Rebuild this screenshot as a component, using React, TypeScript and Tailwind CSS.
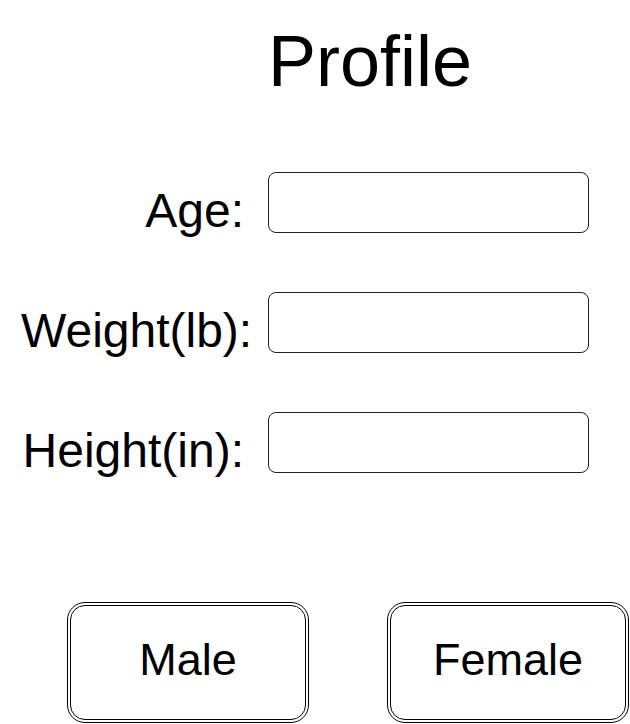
import React from "react";

const fields = ["Age:", "Weight(lb):", "Height(in):"];

const App = () => {
  return (
    <div className="w-[630px] h-[724px] bg-white text-black font-['Liberation_Sans',Arial,sans-serif] overflow-hidden">
      {/* title */}
      <div className="pl-[268px] pt-[25px]">
        <h1 className="text-[72px] leading-none font-normal">Profile</h1>
      </div>

      {/* fields */}
      <div className="flex flex-col gap-[59px] mt-[75px] pl-[21px]">
        {fields.map((label) => (
          <div key={label} className="flex items-start gap-[24px] h-[61px]">
            <label className="w-[223px] shrink-0 text-right whitespace-nowrap text-[48px] leading-none pt-[15px]">
              {label}
            </label>
            <input
              type="text"
              className="w-[321px] h-[61px] border border-[#222] rounded-[8px] px-2 text-2xl outline-none"
            />
          </div>
        ))}
      </div>

      {/* gender */}
      <div className="flex gap-[78px] mt-[129px] pl-[67px]">
        <button className="w-[242px] h-[121px] border-4 border-double border-black rounded-[18px] text-[45px] leading-none pb-[7px]">
          Male
        </button>
        <button className="w-[242px] h-[121px] border-4 border-double border-black rounded-[18px] text-[45px] leading-none pb-[7px]">
          Female
        </button>
      </div>
    </div>
  );
};

export default App;
